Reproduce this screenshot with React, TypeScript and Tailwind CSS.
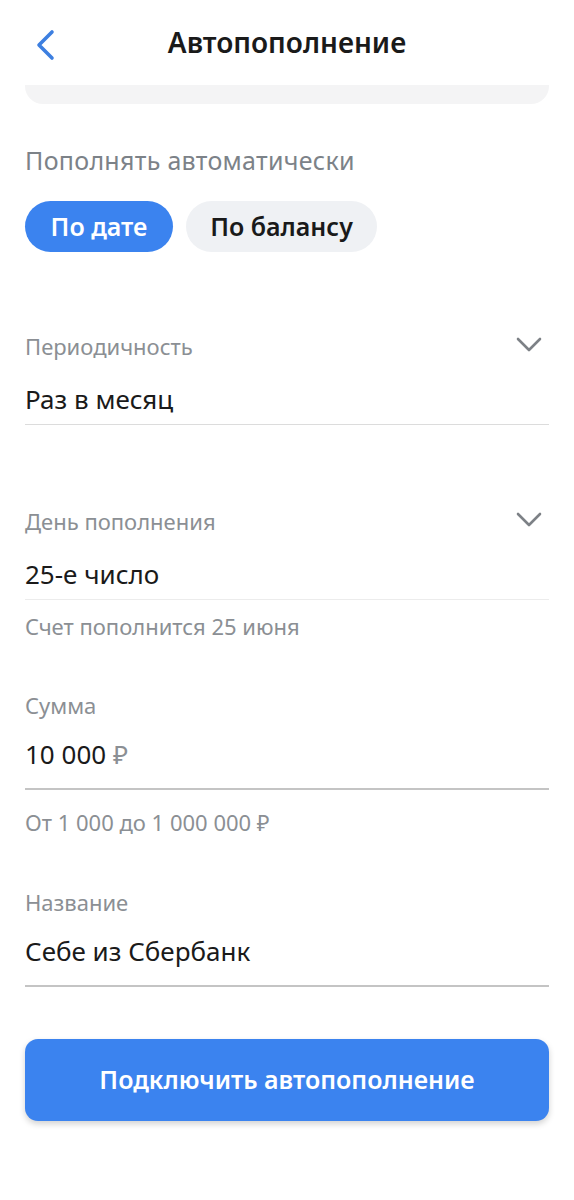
import React from "react";
import { useState } from "react";

const font = { fontFamily: '"Noto Sans", "Open Sans", sans-serif' };

const Chevron = () => (
  <svg width="28" height="18" viewBox="0 0 28 18" fill="none">
    <path
      d="M3 3l11 11L25 3"
      stroke="#7d8186"
      strokeWidth="2.6"
      strokeLinecap="round"
      strokeLinejoin="round"
    />
  </svg>
);

const SelectField = ({
  label,
  value,
  lineClass,
}: {
  label: string;
  value: string;
  lineClass: string;
}) => (
  <div className={`pb-[10px] border-b ${lineClass}`}>
    <div className="flex flex-row items-center justify-between">
      <span className="text-[22px] leading-[26px] text-[#8b8f94]">{label}</span>
      <span className="mr-[6px] -mt-[2px]">
        <Chevron />
      </span>
    </div>
    <div className="mt-[25px] text-[26px] leading-[30px] text-[#1a1a1a]">
      {value}
    </div>
  </div>
);

const App = () => {
  const [mode, setMode] = useState<"date" | "balance">("date");

  return (
    <div className="w-[574px] min-h-[1200px] bg-white" style={font}>
      {/* header */}
      <div className="relative h-[85px] flex flex-row items-center justify-center">
        <button className="absolute left-[30px] top-[24px] p-[4px]">
          <svg width="24" height="34" viewBox="0 0 24 34" fill="none">
            <path
              d="M18 4L5 17l13 13"
              stroke="#3d7fe0"
              strokeWidth="3.6"
              strokeLinecap="round"
              strokeLinejoin="round"
            />
          </svg>
        </button>
        <h1 className="text-[28px] font-semibold text-[#1a1a1a] -mt-[1px]">
          Автопополнение
        </h1>
      </div>

      <div className="px-[25px]">
        <div className="h-[19px] bg-[#f4f4f5] rounded-b-[18px]"></div>

        <div className="mt-[41px] text-[25px] leading-[30px] tracking-[0.3px] text-[#7c8288]">
          Пополнять автоматически
        </div>

        <div className="mt-[26px] flex flex-row gap-[13px]">
          <button
            onClick={() => setMode("date")}
            className={`h-[51px] w-[148px] rounded-full text-[25px] font-semibold ${
              mode === "date"
                ? "bg-[#3b83ef] text-white"
                : "bg-[#eff1f4] text-[#1a1a1a]"
            }`}
          >
            По дате
          </button>
          <button
            onClick={() => setMode("balance")}
            className={`h-[51px] w-[191px] rounded-full text-[25px] font-semibold ${
              mode === "balance"
                ? "bg-[#3b83ef] text-white"
                : "bg-[#eff1f4] text-[#1a1a1a]"
            }`}
          >
            По балансу
          </button>
        </div>

        <div className="mt-[81px]">
          <SelectField
            label="Периодичность"
            value="Раз в месяц"
            lineClass="border-[#dcdcdc]"
          />
        </div>

        <div className="mt-[83px]">
          <SelectField
            label="День пополнения"
            value="25-е число"
            lineClass="border-[#ececec]"
          />
          <div className="mt-[13px] text-[22px] leading-[26px] text-[#8b8f94]">
            Счет пополнится 25 июня
          </div>
        </div>

        <div className="mt-[53px]">
          <div className="text-[22px] leading-[26px] text-[#8b8f94]">Сумма</div>
          <div className="mt-[21px] pb-[19px] border-b-2 border-[#c4c4c4] text-[26px] leading-[30px] text-[#1a1a1a]">
            10 000 <span className="text-[#8b8f94]">₽</span>
          </div>
          <div className="mt-[19px] text-[22px] leading-[26px] text-[#8b8f94]">
            От 1 000 до 1 000 000 ₽
          </div>
        </div>

        <div className="mt-[54px]">
          <div className="text-[22px] leading-[26px] text-[#8b8f94]">
            Название
          </div>
          <div className="mt-[21px] pb-[19px] border-b-2 border-[#c4c4c4] text-[26px] leading-[30px] text-[#1a1a1a]">
            Себе из Сбербанк
          </div>
        </div>

        <button className="mt-[52px] w-full h-[82px] rounded-[13px] bg-[#3b83ef] text-white text-[25px] font-semibold shadow-[0_3px_6px_rgba(0,0,0,0.18)]">
          Подключить автопополнение
        </button>
      </div>
    </div>
  );
};

export default App;
